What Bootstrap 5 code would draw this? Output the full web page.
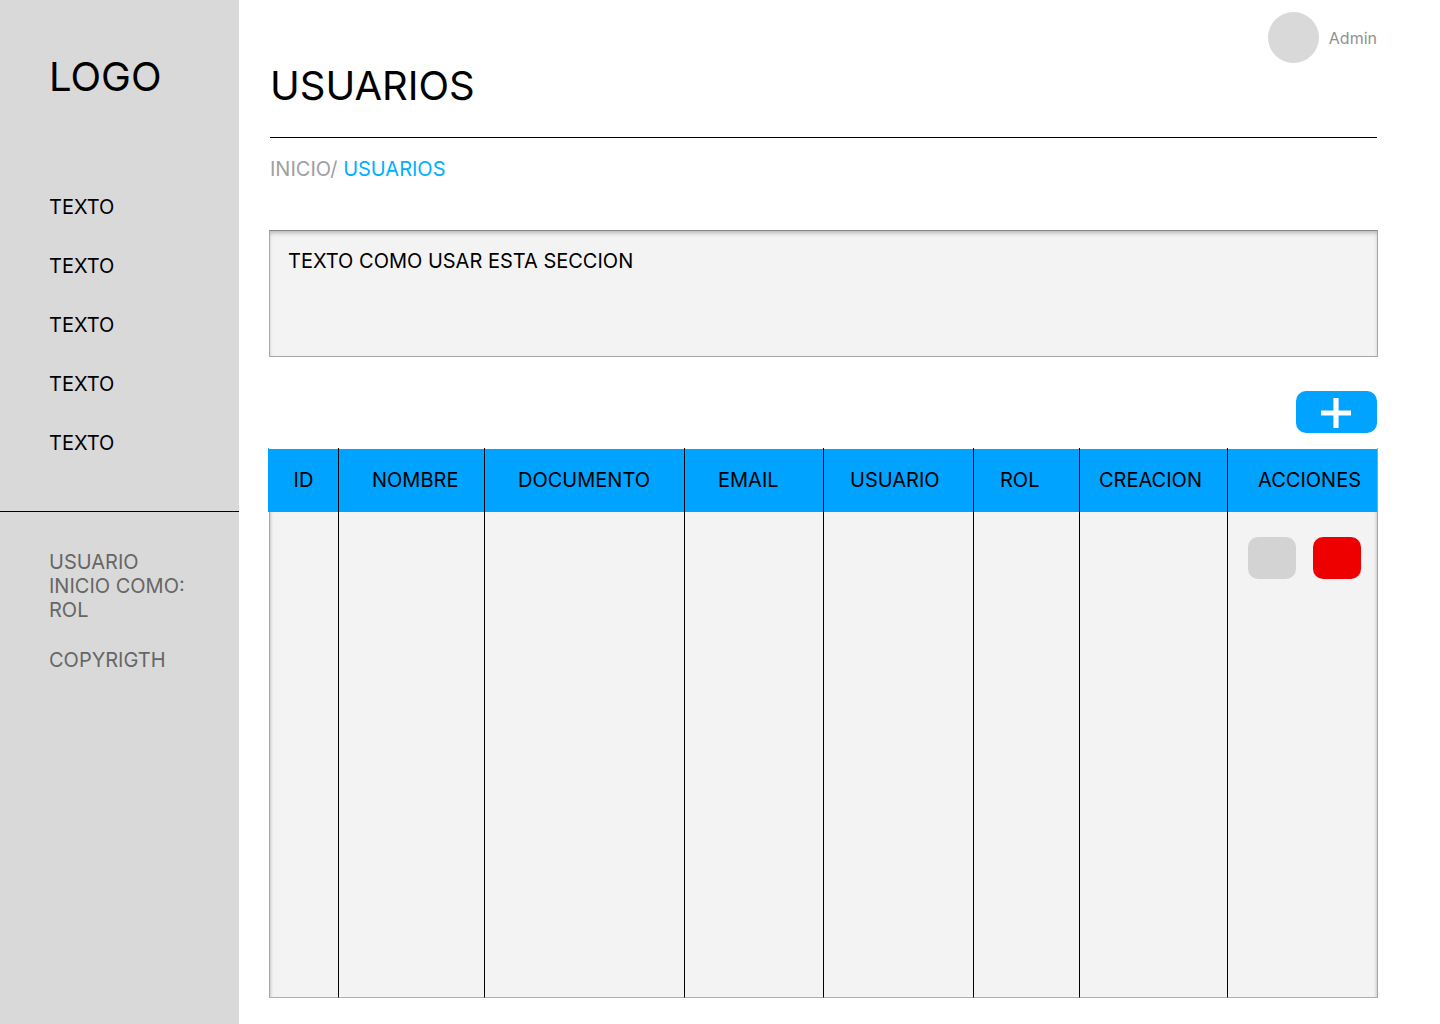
<!DOCTYPE html>
<html lang="es">
<head>
<meta charset="utf-8">
<meta name="viewport" content="width=device-width, initial-scale=1">
<title>Usuarios</title>
<link href="https://cdn.jsdelivr.net/npm/bootstrap@5.3.0/dist/css/bootstrap.min.css" rel="stylesheet">
<style>
  body { font-family: Inter, "Liberation Sans", sans-serif; font-size: 20px; line-height: 24px; color: #000; background: #fff; }
  .page-title, .brand { font-size: 40px; line-height: 48px; font-weight: 400; color: #000; }
  .sidebar { width: 239px; background: #d9d9d9; }
  .sidebar-top { padding: 53px 20px 56px 49px; border-bottom: 1px solid #000; }
  .sidebar-nav { margin-top: 94px; gap: 35px; }
  .sidebar-nav .nav-link { color: #000; }
  .sidebar-info { padding: 38px 20px 38px 49px; gap: 26px; color: #666; }
  .content { padding: 12px 62px 26px 30px; min-width: 0; }
  .page-head { padding-bottom: 27px; margin: 0 1px; border-bottom: 1px solid #000; }
  .page-title { margin: 50px 0 0; }
  .user-chip { gap: 10px; font-size: 16px; color: #919191; }
  .avatar { width: 51px; height: 51px; background: #d9d9d9; }
  .crumbs { padding: 19px 0 49px; margin: 0 1px; color: #a0a0a0; }
  .crumbs .current { color: #00b0ff; }
  .help-box { min-height: 127px; padding: 18px; background: #f3f3f3; border: 1px solid #a6a6a6; border-top-color: #858585; box-shadow: inset 0 3px 4px -1px rgba(0,0,0,.25); }
  .btn-add { width: 81px; height: 42px; margin: 34px 1px 15px; border-radius: 10px; background: #00a3ff; }
  .users { table-layout: fixed; border-collapse: separate; border-spacing: 0; }
  .users th { height: 64px; padding: 0 16px 0 26px; font-weight: 400; background: linear-gradient(#00a3ff, #00a3ff) 0 1px no-repeat; }
  .users th.inset-lg { padding-left: 33px; }
  .users th.inset-sm { padding-left: 19px; }
  .users th:first-child { padding: 0; box-shadow: -1px 0 #00a3ff; }
  .users th:last-child { border-right: 1px solid #8fa9b8; }
  .users th + th, .users td + td { border-left: 1px solid #000; }
  .users td { height: 486px; vertical-align: top; background: #f3f3f3; border-bottom: 1px solid #b0b0b0; }
  .users td:first-child { border-left: 1px solid #a6a6a6; box-shadow: inset 3px 0 3px -2px rgba(0,0,0,.18); }
  .users td:last-child { padding: 25px 16px 0 0; border-right: 1px solid #a6a6a6; box-shadow: inset -3px 0 3px -2px rgba(0,0,0,.18); }
  .row-actions { gap: 17px; }
  .btn-row { width: 48px; height: 42px; border-radius: 10px; }
  .btn-edit { background: #d3d3d3; }
  .btn-delete { background: #ef0000; }
</style>
<script src="https://cdn.jsdelivr.net/npm/bootstrap@5.3.0/dist/js/bootstrap.bundle.min.js"></script>
</head>
<body>
<div class="d-flex min-vh-100">
  <aside class="sidebar flex-shrink-0">
    <div class="sidebar-top">
      <div class="brand">LOGO</div>
      <nav class="sidebar-nav nav flex-column">
        <a class="nav-link p-0" href="#">TEXTO</a>
        <a class="nav-link p-0" href="#">TEXTO</a>
        <a class="nav-link p-0" href="#">TEXTO</a>
        <a class="nav-link p-0" href="#">TEXTO</a>
        <a class="nav-link p-0" href="#">TEXTO</a>
      </nav>
    </div>
    <div class="sidebar-info d-flex flex-column">
      <div>USUARIO<br>INICIO COMO:<br>ROL</div>
      <div>COPYRIGTH</div>
    </div>
  </aside>
  <main class="content flex-grow-1">
    <header class="page-head d-flex justify-content-between align-items-start">
      <h1 class="page-title">USUARIOS</h1>
      <div class="user-chip d-flex align-items-center">
        <span class="avatar rounded-circle"></span>
        <span>Admin</span>
      </div>
    </header>
    <nav class="crumbs" aria-label="breadcrumb"><a class="text-reset text-decoration-none" href="#">INICIO/</a> <span class="current" aria-current="page">USUARIOS</span></nav>
    <section class="help-box">TEXTO COMO USAR ESTA SECCION</section>
    <div class="d-flex justify-content-end">
      <button type="button" class="btn-add btn border-0 p-0 d-flex align-items-center justify-content-center" aria-label="Agregar usuario">
        <svg width="31" height="32" viewBox="0 0 31 32" fill="#fff" aria-hidden="true"><path d="M12.4 2h5.2v12.4H30v5.2H17.6V32h-5.2V19.6H0v-5.2h12.4z"/></svg>
      </button>
    </div>
    <table class="users w-100">
      <colgroup>
        <col style="width:69px"><col style="width:146px"><col style="width:200px"><col style="width:139px">
        <col style="width:150px"><col style="width:106px"><col style="width:148px"><col style="width:151px">
      </colgroup>
      <thead>
        <tr>
          <th scope="col" class="text-center">ID</th>
          <th scope="col" class="inset-lg">NOMBRE</th>
          <th scope="col" class="inset-lg">DOCUMENTO</th>
          <th scope="col" class="inset-lg">EMAIL</th>
          <th scope="col">USUARIO</th>
          <th scope="col">ROL</th>
          <th scope="col" class="inset-sm">CREACION</th>
          <th scope="col" class="text-end">ACCIONES</th>
        </tr>
      </thead>
      <tbody>
        <tr>
          <td></td><td></td><td></td><td></td><td></td><td></td><td></td>
          <td>
            <div class="row-actions d-flex justify-content-end">
              <button type="button" class="btn-row btn-edit btn border-0 p-0" aria-label="Editar"></button>
              <button type="button" class="btn-row btn-delete btn border-0 p-0" aria-label="Eliminar"></button>
            </div>
          </td>
        </tr>
      </tbody>
    </table>
  </main>
</div>
</body>
</html>
